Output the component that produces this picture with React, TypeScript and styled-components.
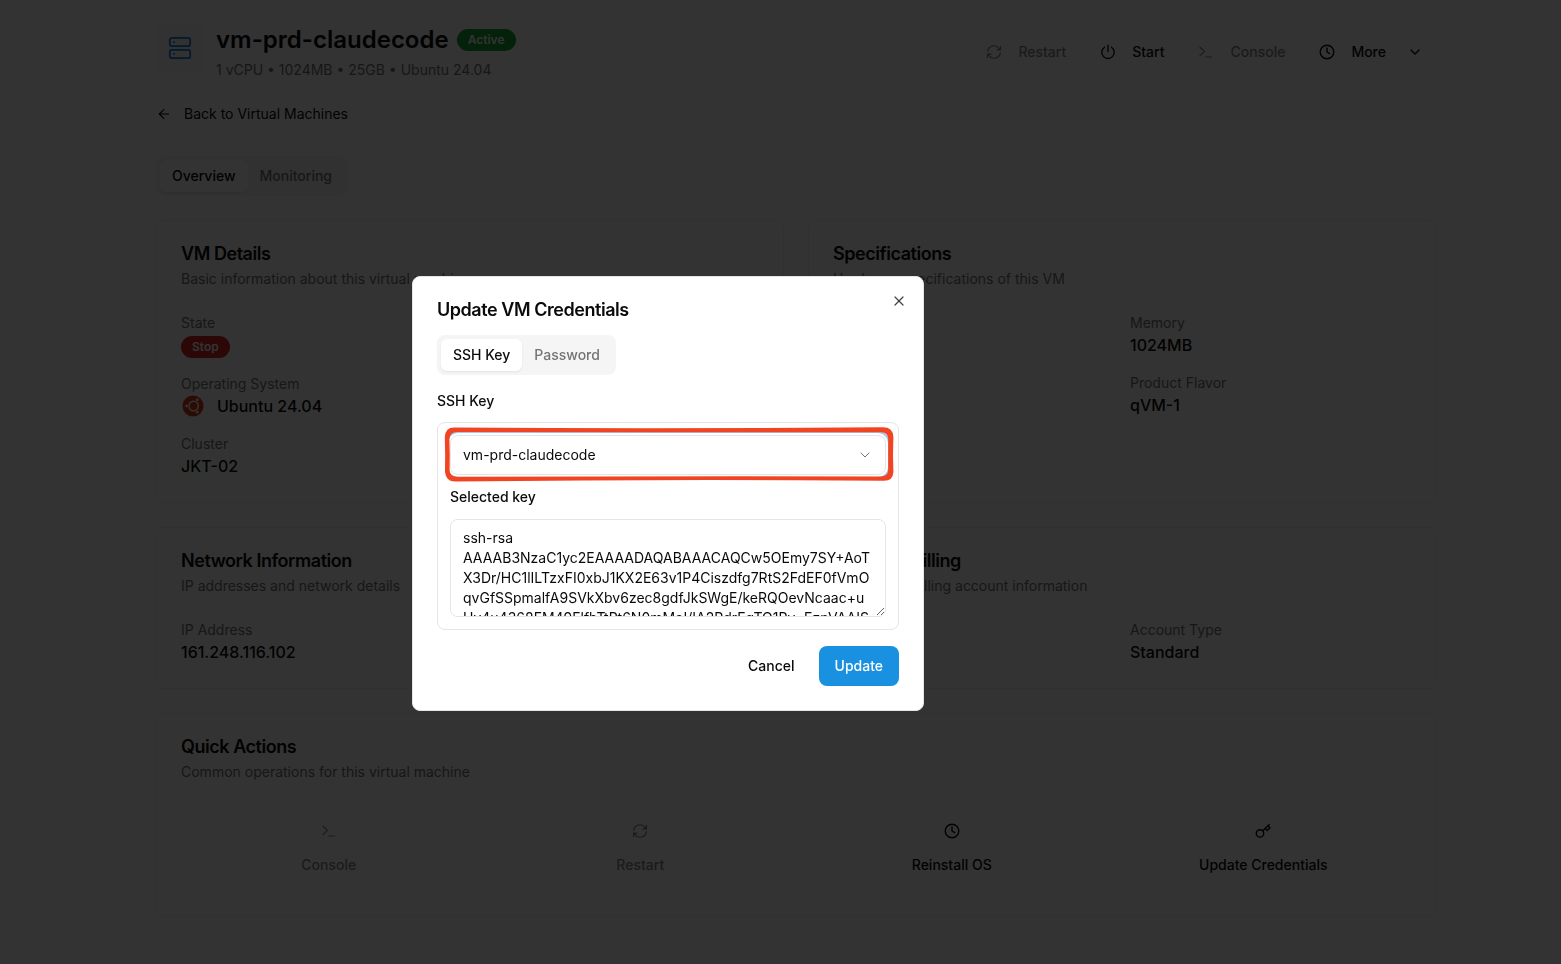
import React from "react";
import styled, { createGlobalStyle, css } from "styled-components";
import { ArrowLeft, ChevronDown, X } from "lucide-react";

const Global = createGlobalStyle`
  *, *::before, *::after { box-sizing: border-box; }
  body { margin: 0; background: #fff; color: #0a0a0a; font: 400 14px/20px Inter, "Liberation Sans", sans-serif; -webkit-font-smoothing: antialiased; }
  button, input, select, textarea { font: inherit; color: inherit; }
  h1, h2, p, dl, dt, dd { margin: 0; }
  button { border: 0; background: none; padding: 0; cursor: pointer; }
`;

const Page = styled.main`
  min-height: 100vh;
  padding: 24px 125px 44px 156px;
`;
const Header = styled.header`
  display: flex;
  justify-content: space-between;
  align-items: center;
  height: 56px;
`;
const Identity = styled.div`
  display: flex;
  align-items: flex-start;
  gap: 12px;
`;
const Tile = styled.div`
  display: grid;
  place-items: center;
  width: 48px;
  height: 48px;
  border-radius: 8px;
  background: #fafafa;
`;
const TitleRow = styled.div`
  display: flex;
  align-items: center;
  gap: 8px;
`;
const Title = styled.h1`
  font-size: 24px;
  line-height: 32px;
  font-weight: 600;
`;
const Muted = styled.p`
  color: #737373;
`;
const Specs = styled(Muted)`
  margin-top: 4px;
`;
const Badge = styled.span<{ $tone: "active" | "stop" }>`
  display: inline-block;
  padding: 3px 11px;
  border-radius: 11px;
  font-size: 12px;
  line-height: 16px;
  font-weight: 600;
  color: #fff;
  background: ${(p) => (p.$tone === "active" ? "#16a335" : "#dc2626")};
`;
const Toolbar = styled.nav`
  display: flex;
  align-items: center;
  gap: 8px;
`;
const ToolButton = styled.button`
  display: flex;
  align-items: center;
  gap: 16px;
  height: 36px;
  padding: 0 13px;
  font-weight: 500;
  &:disabled { opacity: 0.5; }
`;
const MoreChevron = styled(ChevronDown)`
  margin-left: 5px;
`;
const BackLink = styled.a`
  display: flex;
  align-items: center;
  gap: 12px;
  width: fit-content;
  margin-top: 24px;
  color: inherit;
  text-decoration: none;
`;
const Tabs = styled.div`
  display: flex;
  width: fit-content;
  height: 40px;
  padding: 4px;
  border-radius: 8px;
  background: #f5f5f5;
`;
const PageTabs = styled(Tabs)`
  margin-top: 32px;
`;
const Tab = styled.button<{ $on?: boolean }>`
  padding: 0 12px;
  border-radius: 6px;
  font-weight: 500;
  color: #737373;
  ${(p) => p.$on && css`
    color: #0a0a0a;
    background: #fff;
    box-shadow: 0 1px 2px rgba(0, 0, 0, 0.08);
  `}
`;
const Cards = styled.div`
  display: grid;
  grid-template-columns: 1fr 1fr;
  gap: 24px;
  margin-top: 24px;
`;
const Card = styled.section<{ $wide?: boolean }>`
  padding: 24px;
  border: 1px solid #f0f0f0;
  border-radius: 8px;
  ${(p) => p.$wide && css`grid-column: 1 / -1;`}
`;
const CardTitle = styled.h2`
  margin-bottom: 6px;
  font-size: 18px;
  line-height: 18px;
  font-weight: 600;
  letter-spacing: -0.025em;
`;
const Facts = styled.dl`
  display: grid;
  grid-template-columns: 1fr 1fr;
  gap: 16px;
  margin-top: 24px;
  dt { color: #737373; }
  dd { font-size: 16px; line-height: 24px; font-weight: 500; }
`;
const Fact = styled.div<{ $column?: number }>`
  grid-column: ${(p) => p.$column ?? 1};
`;
const OsName = styled.span`
  display: flex;
  align-items: center;
  gap: 12px;
`;
const Actions = styled.div`
  display: grid;
  grid-template-columns: repeat(4, 1fr);
  gap: 16px;
  margin-top: 24px;
`;
const Action = styled.button`
  display: flex;
  flex-direction: column;
  align-items: center;
  justify-content: center;
  gap: 16px;
  height: 86px;
  font-weight: 500;
  &:disabled { opacity: 0.5; }
`;

const Overlay = styled.div`
  position: fixed;
  inset: 0;
  display: flex;
  align-items: center;
  justify-content: center;
  padding: 23px 225px 0 0;
  background: rgba(0, 0, 0, 0.8);
`;
const Dialog = styled.form`
  position: relative;
  width: 512px;
  padding: 24px;
  border: 1px solid #e5e5e5;
  border-radius: 8px;
  background: #fff;
`;
const DialogTitle = styled.h2`
  margin-bottom: 16px;
  font-size: 18px;
  line-height: 18px;
  font-weight: 600;
  letter-spacing: -0.025em;
`;
const CloseButton = styled.button`
  position: absolute;
  top: 16px;
  right: 16px;
  display: grid;
  place-items: center;
  width: 16px;
  height: 16px;
  color: #404040;
`;
const Label = styled.label`
  display: block;
  font-weight: 500;
`;
const SectionLabel = styled(Label)`
  margin: 16px 0 11px;
`;
const KeyPanel = styled.div`
  padding: 12px;
  border: 1px solid #e5e5e5;
  border-radius: 8px;
`;
const SelectWrap = styled.div`
  position: relative;
  margin-bottom: 12px;
`;
const KeySelect = styled.select`
  display: block;
  appearance: none;
  width: 100%;
  height: 40px;
  padding: 0 12px;
  border: 1px solid #e5e5e5;
  border-radius: 8px;
  background: #fff;
  outline: 0;
  box-shadow: 0 0 0 2px #fff, 0 0 0 4px #a3c8f2;
`;
const SelectChevron = styled(ChevronDown)`
  position: absolute;
  top: 12px;
  right: 13px;
  color: #737373;
  pointer-events: none;
`;
const Highlight = styled.svg`
  position: absolute;
  top: -8px;
  left: -6px;
  width: calc(100% + 14px);
  height: 56px;
  overflow: visible;
  pointer-events: none;
`;
const KeyText = styled.textarea`
  display: block;
  width: 100%;
  height: 98px;
  margin-top: 12px;
  padding: 8px 12px;
  border: 1px solid #e5e5e5;
  border-radius: 8px;
  background: #fff;
  word-break: break-word;
  scrollbar-width: none;
  resize: vertical;
  outline: 0;
`;
const Footer = styled.footer`
  display: flex;
  justify-content: flex-end;
  gap: 8px;
  margin-top: 16px;
`;
const FooterButton = styled.button<{ $primary?: boolean }>`
  height: 40px;
  padding: 0 16px;
  border-radius: 8px;
  font-weight: 500;
  ${(p) => p.$primary && css`
    color: #fff;
    background: #1a90e0;
  `}
`;

const Stroke = ({ size = 16, width = 1.2, children }: { size?: number; width?: number; children: React.ReactNode }) => (
  <svg width={size} height={size} viewBox="0 0 16 16" fill="none" stroke="currentColor" strokeWidth={width} strokeLinecap="round" strokeLinejoin="round" aria-hidden="true">
    {children}
  </svg>
);
const RefreshIcon = () => (
  <Stroke width={1.2}>
    <path d="M1.7 7.2a6.3 6.3 0 0 1 11.4-2.7l1.1 1.3M14.4 2.4v3.5h-3.5M14.3 8.8A6.3 6.3 0 0 1 2.9 11.5l-1.1-1.3M1.6 13.6v-3.5h3.5" />
  </Stroke>
);
const PowerIcon = () => (
  <Stroke width={1.3}>
    <path d="M8 1.2v6.3M4.5 3.2a6.2 6.2 0 1 0 7 0" />
  </Stroke>
);
const ConsoleIcon = () => (
  <Stroke width={1.2}>
    <path d="M2 3.2 6.4 7.4 2 11.6M7.6 13h6" />
  </Stroke>
);
const ClockIcon = () => (
  <Stroke width={1.4}>
    <circle cx="8" cy="8" r="6.8" />
    <path d="M8 4v4l2.6 1.6" />
  </Stroke>
);
const KeyIcon = () => (
  <Stroke width={1.4}>
    <circle cx="5" cy="10.4" r="3.7" />
    <path d="m7.8 7.8 6.4-6.2M10.3 5.4l1.9 2 2.8-2.7-1.9-2" />
  </Stroke>
);
const ServerIcon = () => (
  <svg width="24" height="24" viewBox="0 0 24 24" fill="none" stroke="#1a7fe0" strokeWidth="1.8" strokeLinecap="round" aria-hidden="true">
    <rect x="1.8" y="1.8" width="20.4" height="8.4" rx="2" />
    <rect x="1.8" y="13.8" width="20.4" height="8.4" rx="2" />
    <path d="M6 6h.2M6 18h.2" />
  </svg>
);
const UbuntuIcon = () => (
  <svg width="24" height="24" viewBox="0 0 24 24" aria-hidden="true">
    <circle cx="12" cy="12" r="10.5" fill="#dd3a14" />
    <circle cx="12.6" cy="12" r="4.7" fill="none" stroke="#fff" strokeWidth="1.6" />
    <g fill="#fff" stroke="#dd3a14" strokeWidth="0.7">
      <circle cx="5.6" cy="12" r="1.8" />
      <circle cx="16.2" cy="5.9" r="1.8" />
      <circle cx="16.2" cy="18.1" r="1.8" />
    </g>
  </svg>
);

const PUBLIC_KEY =
  "ssh-rsa AAAAB3NzaC1yc2EAAAADAQABAAACAQCw5OEmy7SY+AoTX3Dr/HC1lILTzxFI0xbJ1KX2E63v1P4Ciszdfg7RtS2FdEF0fVmOqvGfSSpmalfA9SVkXbv6zec8gdfJkSWgE/keRQOevNcaac+uUv4u4368FM49FlfhTtPt6N0mMoI/IA2PdrEgTO1Pv+EzpVAAIS";

export default function App() {
  return (
    <>
      <Global />
      <Page>
        <Header>
          <Identity>
            <Tile><ServerIcon /></Tile>
            <div>
              <TitleRow>
                <Title>vm-prd-claudecode</Title>
                <Badge $tone="active">Active</Badge>
              </TitleRow>
              <Specs>1 vCPU • 1024MB • 25GB • Ubuntu 24.04</Specs>
            </div>
          </Identity>
          <Toolbar aria-label="Machine actions">
            <ToolButton disabled><RefreshIcon />Restart</ToolButton>
            <ToolButton><PowerIcon />Start</ToolButton>
            <ToolButton disabled><ConsoleIcon />Console</ToolButton>
            <ToolButton><ClockIcon />More<MoreChevron size={16} /></ToolButton>
          </Toolbar>
        </Header>
        <BackLink href="#machines"><ArrowLeft size={16} strokeWidth={1.6} />Back to Virtual Machines</BackLink>
        <PageTabs role="tablist">
          <Tab role="tab" aria-selected $on>Overview</Tab>
          <Tab role="tab" aria-selected={false}>Monitoring</Tab>
        </PageTabs>
        <Cards>
          <Card>
            <CardTitle>VM Details</CardTitle>
            <Muted>Basic information about this virtual machine</Muted>
            <Facts>
              <Fact><dt>State</dt><dd><Badge $tone="stop">Stop</Badge></dd></Fact>
              <Fact><dt>Operating System</dt><dd><OsName><UbuntuIcon />Ubuntu 24.04</OsName></dd></Fact>
              <Fact><dt>Cluster</dt><dd>JKT-02</dd></Fact>
            </Facts>
          </Card>
          <Card>
            <CardTitle>Specifications</CardTitle>
            <Muted>Hardware specifications of this VM</Muted>
            <Facts>
              <Fact $column={2}><dt>Memory</dt><dd>1024MB</dd></Fact>
              <Fact $column={2}><dt>Product Flavor</dt><dd>qVM-1</dd></Fact>
            </Facts>
          </Card>
          <Card>
            <CardTitle>Network Information</CardTitle>
            <Muted>IP addresses and network details</Muted>
            <Facts>
              <Fact><dt>IP Address</dt><dd>161.248.116.102</dd></Fact>
            </Facts>
          </Card>
          <Card>
            <CardTitle>Project &amp; Billing</CardTitle>
            <Muted>Project and billing account information</Muted>
            <Facts>
              <Fact $column={2}><dt>Account Type</dt><dd>Standard</dd></Fact>
            </Facts>
          </Card>
          <Card $wide>
            <CardTitle>Quick Actions</CardTitle>
            <Muted>Common operations for this virtual machine</Muted>
            <Actions>
              <Action disabled><ConsoleIcon />Console</Action>
              <Action disabled><RefreshIcon />Restart</Action>
              <Action><ClockIcon />Reinstall OS</Action>
              <Action><KeyIcon />Update Credentials</Action>
            </Actions>
          </Card>
        </Cards>
      </Page>
      <Overlay>
        <Dialog role="dialog" aria-modal="true" aria-labelledby="dialog-title" onSubmit={(e) => e.preventDefault()}>
          <DialogTitle id="dialog-title">Update VM Credentials</DialogTitle>
          <CloseButton type="button" aria-label="Close"><X size={16} strokeWidth={1.8} /></CloseButton>
          <Tabs role="tablist">
            <Tab type="button" role="tab" aria-selected $on>SSH Key</Tab>
            <Tab type="button" role="tab" aria-selected={false}>Password</Tab>
          </Tabs>
          <SectionLabel htmlFor="ssh-key">SSH Key</SectionLabel>
          <KeyPanel>
            <SelectWrap>
              <KeySelect id="ssh-key" defaultValue="vm-prd-claudecode">
                <option>vm-prd-claudecode</option>
              </KeySelect>
              <SelectChevron size={16} strokeWidth={1.5} />
              <Highlight viewBox="0 0 450 56" preserveAspectRatio="none" aria-hidden="true">
                <path fill="#f04423" fillRule="evenodd" d="M10 0.6Q225 2.2 439 0.2Q449 0.2 449.4 10Q448.6 28 449.4 45Q449 53.8 440 53.8Q225 52 11 54.6Q2 54.6 1 45Q1.4 28 0.8 10Q1.5 0.6 10 0.6ZM13 5Q6 5 5.4 12Q6 28 5.6 43Q6 49.8 13 49.8Q225 49 437 49.4Q444 49.2 444.2 43V12Q444.2 5.4 437 5.2Q225 5.2 13 5Z" />
              </Highlight>
            </SelectWrap>
            <Label htmlFor="key-text">Selected key</Label>
            <KeyText id="key-text" readOnly value={PUBLIC_KEY} />
          </KeyPanel>
          <Footer>
            <FooterButton type="button">Cancel</FooterButton>
            <FooterButton type="submit" $primary>Update</FooterButton>
          </Footer>
        </Dialog>
      </Overlay>
    </>
  );
}
